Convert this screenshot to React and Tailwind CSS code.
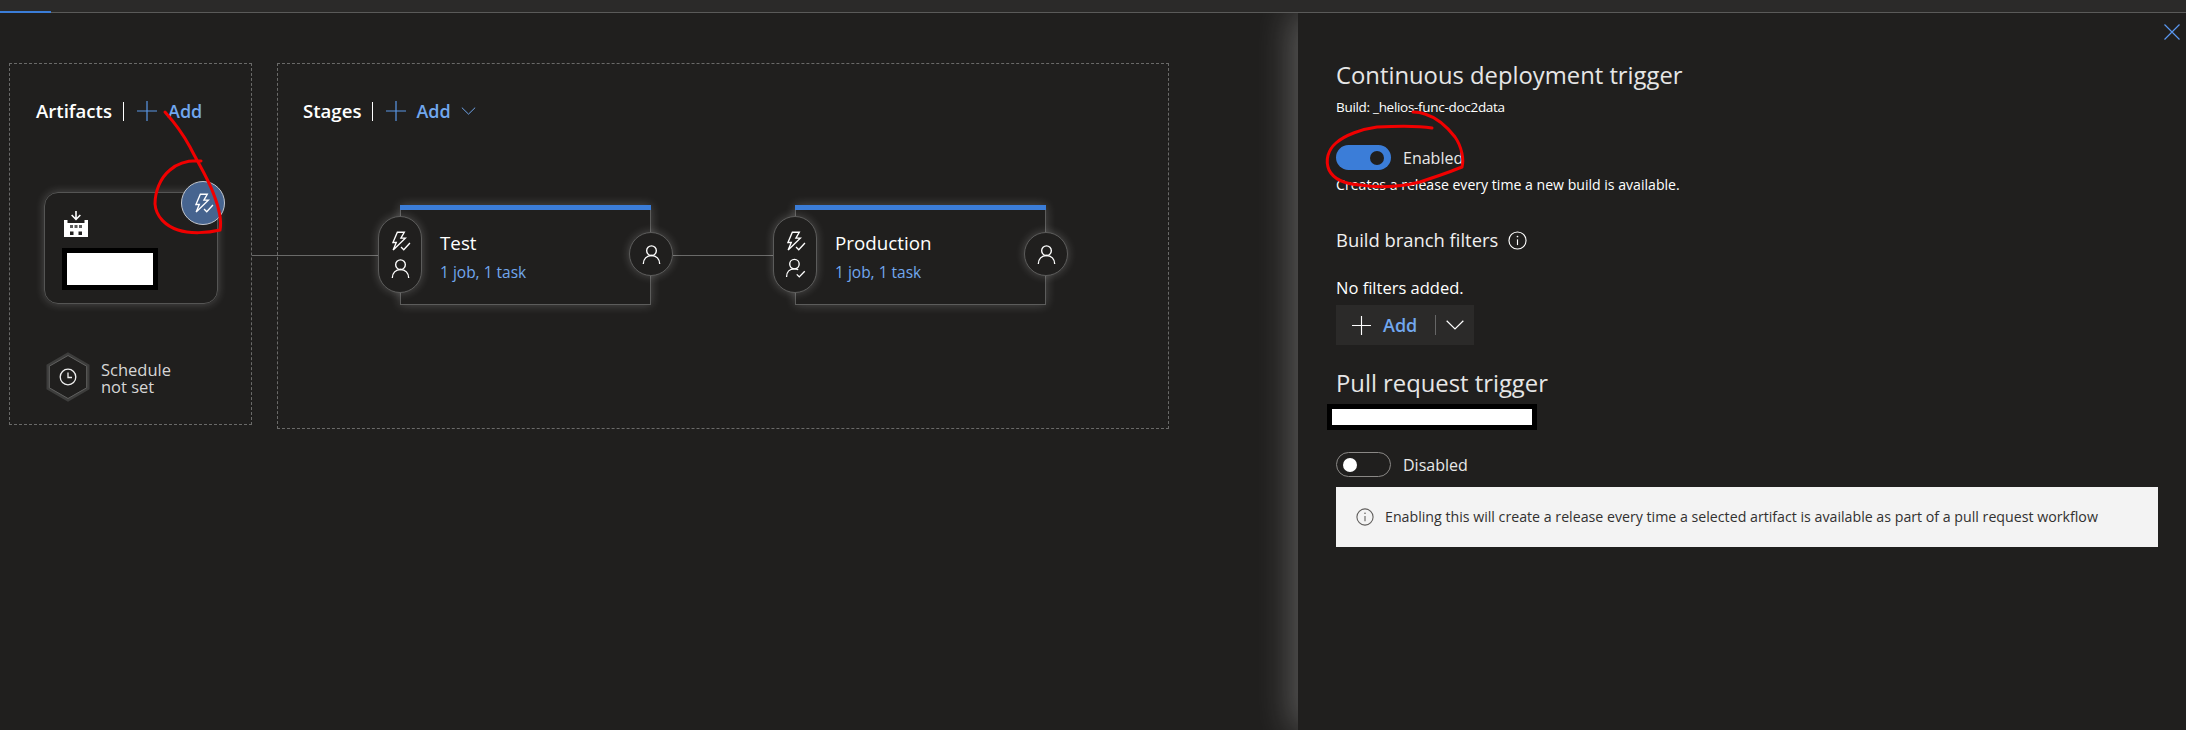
import React from 'react';

const BoltCheck = ({ className = 'w-5 h-5' }) => (
  <svg viewBox="0 0 20 20" fill="none" stroke="currentColor" strokeWidth="1.3" className={className}>
    <path d="M7 1.200h6.600L10.400 6.800h4.200L3 18.200l3-7.200H2.800z" strokeLinejoin="miter" />
    <path d="M10.500 15.200l2.600 2.600 5.900-6.300" />
  </svg>
);

const Person = ({ className = 'w-5 h-5' }) => (
  <svg viewBox="0 0 20 20" fill="none" stroke="currentColor" strokeWidth="1.3" className={className}>
    <circle cx="10" cy="6.400" r="4.600" />
    <path d="M2.200 19c0-4.800 3.200-8 7.800-8s7.800 3.200 7.800 8" />
  </svg>
);

const PersonCheck = ({ className = 'w-5 h-5' }) => (
  <svg viewBox="0 0 20 20" fill="none" stroke="currentColor" strokeWidth="1.3" className={className}>
    <circle cx="9" cy="5.800" r="4.500" />
    <path d="M1.500 18c0-4.600 3-7.600 7.500-7.600 1.400 0 2.600.3 3.600.8" />
    <path d="M11.200 15.600l2.400 2.400 5.200-5.400" />
  </svg>
);

const Plus = ({ className }) => (
  <svg viewBox="0 0 20 20" fill="none" stroke="currentColor" strokeWidth="1.2" className={className}>
    <path d="M0 10h20M10 0v20" />
  </svg>
);

const Chevron = ({ className }) => (
  <svg viewBox="0 0 16 9" fill="none" stroke="currentColor" strokeWidth="1.1" className={className}>
    <path d="M.5.700L8 8l7.500-7.300" />
  </svg>
);

const InfoIcon = ({ className }) => (
  <svg viewBox="0 0 20 20" fill="none" stroke="currentColor" strokeWidth="1.2" className={className}>
    <circle cx="10" cy="10" r="9" />
    <path d="M10 8.800v6" />
    <circle cx="10" cy="5.800" r=".9" fill="currentColor" stroke="none" />
  </svg>
);

const Factory = () => (
  <svg viewBox="0 0 24 26" className="w-[24px] h-[26px]">
    <path d="M11.200 0h1.600v6.500l3-3 1.100 1.100-4.900 4.900-4.900-4.900 1.100-1.100 3 3z" fill="#fff" />
    <path d="M0 9h3.500v3h17V9H24v17H0z" fill="#fff" />
    <path d="M6 14h3v3H6zM10.500 14h3v3h-3zM15 14h3v3h-3z" fill="#5b5b5b" />
    <path d="M6 20.500h3.500V24H6zM14.500 20.500H18V24h-3.500z" fill="#201f1e" />
  </svg>
);

const Hexagon = () => (
  <div className="relative w-[44px] h-[50px] flex items-center justify-center">
    <svg viewBox="0 0 44 50" fill="none" className="absolute inset-0 w-full h-full">
      <path d="M22 2l20 11.500v23L22 48 2 36.500v-23z" stroke="#3d3d3c" strokeWidth="3" />
      <path d="M22 3.500l18.700 10.700v21.600L22 46.500 3.300 35.800V14.200z" stroke="#5f5f5e" strokeWidth="1" />
    </svg>
    <svg viewBox="0 0 18 18" fill="none" stroke="#f0f0f0" strokeWidth="1.300" className="relative w-[18px] h-[18px]">
      <circle cx="9" cy="9" r="7.800" />
      <path d="M9 4.500V9.500h4" />
    </svg>
  </div>
);

const glow = 'shadow-[0_0_10px_rgba(255,255,255,0.22)]';

const Stage = ({ name, approval }) => (
  <div className="relative pl-[22px] pr-[22px]">
    <div className={`w-[251px] h-[100px] border-x border-b border-[#5c5c5b] ${glow} flex flex-col`}>
      <div className="h-[5px] -mx-px bg-[#3b7dd8]" />
      <div className="pl-[39px] pt-[21px]">
        <div className="text-[18.800px] leading-[24px] text-white">{name}</div>
        <div className="text-[15.500px] leading-[20px] mt-[7px] text-[#71a7ee]">1 job, 1 task</div>
      </div>
    </div>
    <div className={`absolute left-0 top-[11px] w-[44px] h-[77px] rounded-full border border-[#5c5c5b] bg-[#201f1e] ${glow} flex flex-col items-center justify-center gap-[6px] text-white`}>
      <BoltCheck className="w-[21px] h-[21px]" />
      {approval ? <PersonCheck className="w-[21px] h-[21px]" /> : <Person className="w-[21px] h-[21px]" />}
    </div>
    <div className={`absolute right-0 top-[27px] w-[44px] h-[44px] rounded-full border border-[#5c5c5b] bg-[#201f1e] ${glow} flex items-center justify-center text-white`}>
      <Person className="w-[21px] h-[21px]" />
    </div>
  </div>
);

const Connector = ({ width }) => <div className={`${width} h-px bg-[#6a6a69] self-center`} />;

const Toggle = ({ on, label }) => (
  <div className="flex items-center h-[25px]">
    {on ? (
      <div className="w-[55px] h-[25px] rounded-full bg-[#3b7dd8] flex items-center justify-end pr-[7px]">
        <div className="w-[14px] h-[14px] rounded-full bg-[#201f1e]" />
      </div>
    ) : (
      <div className="w-[55px] h-[25px] rounded-full border border-[#8a8886] flex items-center pl-[6px]">
        <div className="w-[14px] h-[14px] rounded-full bg-white" />
      </div>
    )}
    <span className="ml-[12px] text-[16px] leading-[22px] text-[#e8e8e8]">{label}</span>
  </div>
);

export default function App() {
  return (
    <div className="relative h-screen w-full flex flex-col overflow-hidden bg-[#201f1e] font-['Open_Sans','Noto_Sans',sans-serif]">
      <div className="h-[13px] shrink-0 bg-[#2b2a29] border-b border-[#5a5a59] flex items-end">
        <div className="w-[51px] h-[2px] -mb-px bg-[#3b7dd8]" />
      </div>

      <div className="flex flex-1 min-h-0 overflow-hidden">
        <div className="flex-1 pl-[9px] pt-[50px] flex items-start gap-[25px]">
          {/* Artifacts */}
          <div className="w-[243px] h-[362px] border border-dashed border-[#6a6a69]">
            <div className="flex items-center pl-[26px] pt-[36px] h-[58px]">
              <span className="text-[18.600px] leading-[22px] font-semibold text-white">Artifacts</span>
              <div className="w-px h-[19px] bg-white ml-[11px]" />
              <Plus className="w-[20px] h-[20px] ml-[13px] text-[#5a97e6]" />
              <span className="ml-[11px] text-[18px] leading-[22px] font-semibold text-[#71a7ee]">Add</span>
            </div>
            <div className={`relative ml-[34px] mt-[70px] w-[174px] h-[112px] rounded-[14px] border border-[#555554] ${glow} pl-[19px] pt-[18px]`}>
              <Factory />
              <div className="w-[96px] h-[42px] mt-[11px] -ml-[2px] border-[5px] border-black bg-white" />
              <div className="absolute -right-[8px] -top-[12px] w-[44px] h-[44px] rounded-full bg-[#46648f] border border-[#c4c8cf] flex items-center justify-center text-white">
                <BoltCheck className="w-[21px] h-[21px]" />
              </div>
            </div>
            <div className="flex items-center ml-[36px] mt-[48px]">
              <Hexagon />
              <div className="ml-[11px] pt-[2px] text-[16.500px] leading-[17px] text-[#d6d6d6]">
                Schedule
                <br />
                not set
              </div>
            </div>
          </div>

          {/* Stages */}
          <div className="w-[892px] h-[366px] border border-dashed border-[#6a6a69]">
            <div className="flex items-center pl-[25px] pt-[36px] h-[58px]">
              <span className="text-[18.600px] leading-[22px] font-semibold text-white">Stages</span>
              <div className="w-px h-[19px] bg-white ml-[11px]" />
              <Plus className="w-[20px] h-[20px] ml-[13px] text-[#5a97e6]" />
              <span className="ml-[10px] text-[18px] leading-[22px] font-semibold text-[#71a7ee]">Add</span>
              <Chevron className="w-[15px] h-[8px] ml-[10px] text-[#71a7ee]" />
            </div>
            <div className="flex mt-[83px] -ml-[26px]">
              <Connector width="w-[126px]" />
              <Stage name="Test" />
              <Connector width="w-[100px]" />
              <Stage name="Production" approval />
            </div>
          </div>
        </div>

        {/* Trigger panel */}
        <div className="relative z-10 w-[888px] shrink-0 bg-[#201f1e] pl-[38px] pt-[46px] shadow-[-6px_0_34px_rgba(255,255,255,0.28)]">
          <button className="absolute right-[6px] top-[11px] text-[#5a97f0]">
            <svg viewBox="0 0 16 16" fill="none" stroke="currentColor" strokeWidth="1.200" className="w-[16px] h-[16px]">
              <path d="M.5.500l15 15M15.500.500l-15 15" />
            </svg>
          </button>

          <h2 className="text-[23.800px] leading-[32px] text-[#e6e6e6]">Continuous deployment trigger</h2>
          <div className="mt-[6px] text-[13.500px] tracking-[-0.3px] leading-[20px] text-white">Build: _helios-func-doc2data</div>
          <div className="mt-[28px]">
            <Toggle on label="Enabled" />
          </div>
          <div className="mt-[5px] text-[14.100px] leading-[20px] text-white">Creates a release every time a new build is available.</div>

          <div className="mt-[33px] flex items-center h-[24px]">
            <span className="text-[18.400px] leading-[24px] text-[#f0f0f0]">Build branch filters</span>
            <InfoIcon className="w-[19px] h-[19px] ml-[10px] text-white" />
          </div>
          <div className="mt-[25px] text-[16.500px] leading-[22px] text-white">No filters added.</div>
          <div className="mt-[6px] w-[138px] h-[40px] bg-[#2b2a29] flex items-center pl-[16px]">
            <Plus className="w-[19px] h-[19px] text-white" />
            <span className="ml-[12px] text-[18px] font-semibold leading-[22px] text-[#71a7ee]">Add</span>
            <div className="w-px h-[20px] bg-[#666] ml-[18px]" />
            <Chevron className="w-[18px] h-[10px] ml-[10px] text-white" />
          </div>

          <h2 className="mt-[22px] text-[23.800px] leading-[32px] text-[#e6e6e6]">Pull request trigger</h2>
          <div className="mt-[5px] -ml-[9px] w-[210px] h-[26px] border-[5px] border-black bg-white" />
          <div className="mt-[22px]">
            <Toggle label="Disabled" />
          </div>
          <div className="mt-[10px] w-[822px] h-[60px] bg-[#f3f3f3] flex items-center pl-[20px]">
            <InfoIcon className="w-[18px] h-[18px] text-[#605e5c]" />
            <span className="ml-[11px] text-[14.200px] leading-[20px] text-[#323130]">
              Enabling this will create a release every time a selected artifact is available as part of a pull request workflow
            </span>
          </div>
        </div>
      </div>

      {/* red pen marks drawn over the screenshot */}
      <svg className="absolute inset-0 z-20 w-full h-full pointer-events-none" viewBox="0 0 2186 730" fill="none" stroke="#f00000" strokeWidth="3" strokeLinecap="round">
        <path d="M201 161C188 160 178 163 170 170C160 178 155 192 155 204C156 217 166 226 178 230C190 234 208 233 220 230C222 220 219 208 214 195C208 178 198 163 190 147C183 134 174 122 165 112" />
        <path d="M1432 128C1415 125 1395 126 1377 127C1362 129 1345 135 1336 143C1328 150 1325 160 1329 170C1334 180 1345 184 1360 185C1380 188 1400 187 1420 182C1435 177 1450 172 1462 167C1464 160 1462 147 1455 137C1448 128 1438 118 1425 114C1420 112 1416 112 1413 112" />
      </svg>
    </div>
  );
}
